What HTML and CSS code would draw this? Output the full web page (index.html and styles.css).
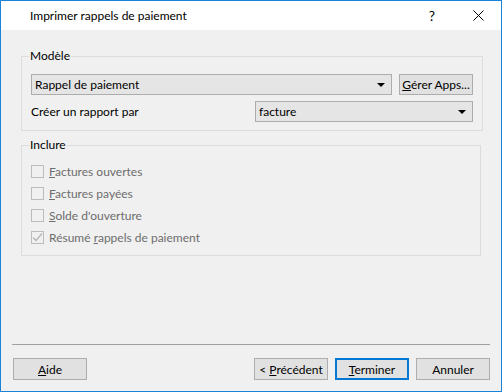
FILE: index.html
```html
<!DOCTYPE html>
<html>
<head>
    <title>Imprimer rappels de paiement</title>
    <link rel="stylesheet" href="styles.css">
</head>
<body>
    <div class="window">
        <div class="titlebar">
            <span class="title">Imprimer rappels de paiement</span>
            <span class="caption-btn help">?</span>
            <span class="caption-btn close">
                <svg width="11" height="11" viewBox="0 0 11 11">
                    <path d="M0.5 0.5 L10.5 10.5 M10.5 0.5 L0.5 10.5" stroke="#000" stroke-width="1" fill="none"/>
                </svg>
            </span>
        </div>

        <div class="content">
            <div class="main">
                <fieldset class="group">
                    <legend>Modèle</legend>
                    <div class="row">
                        <div class="combo combo-wide">
                            <span>Rappel de paiement</span>
                            <span class="arrow"></span>
                        </div>
                        <div class="btn btn-apps"><span><u>G</u>érer Apps...</span></div>
                    </div>
                    <div class="row row-second">
                        <span class="label">Créer un rapport par</span>
                        <div class="combo combo-short">
                            <span>facture</span>
                            <span class="arrow"></span>
                        </div>
                    </div>
                </fieldset>

                <fieldset class="group group-include">
                    <legend>Inclure</legend>
                    <div class="check-row">
                        <span class="check"></span>
                        <span><u>F</u>actures ouvertes</span>
                    </div>
                    <div class="check-row">
                        <span class="check"></span>
                        <span><u>F</u>actures payées</span>
                    </div>
                    <div class="check-row">
                        <span class="check"></span>
                        <span><u>S</u>olde d'ouverture</span>
                    </div>
                    <div class="check-row">
                        <span class="check">
                            <svg width="11" height="11" viewBox="0 0 11 11">
                                <polyline points="1,5.5 4,8.5 10,1.5" stroke="#b4b4b4" stroke-width="1.2" fill="none"/>
                            </svg>
                        </span>
                        <span>Résumé <u>r</u>appels de paiement</span>
                    </div>
                </fieldset>
            </div>

            <div class="footer">
                <div class="separator"></div>
                <div class="buttons">
                    <div class="btn"><span><u>A</u>ide</span></div>
                    <div class="spacer"></div>
                    <div class="btn"><span>&lt; <u>P</u>récédent</span></div>
                    <div class="btn btn-default"><span><u>T</u>erminer</span></div>
                    <div class="btn"><span>Annuler</span></div>
                </div>
            </div>
        </div>
    </div>
</body>
</html>
```

FILE: styles.css
```css
body {
    margin: 0;
    font-family: Lato, "Noto Sans", sans-serif;
    font-size: 12px;
    color: #000;
}
.window {
    width: 500px;
    height: 390px;
    border: 1px solid #1883d7;
    display: flex;
    flex-direction: column;
    background-color: #f0f0f0;
}
.titlebar {
    height: 29px;
    background-color: #fff;
    display: flex;
    align-items: center;
}
.title {
    flex: 1;
    padding-left: 29px;
}
.caption-btn {
    width: 46px;
    height: 29px;
    display: flex;
    align-items: center;
    justify-content: center;
}
.help {
    font-size: 14px;
}
.content {
    flex: 1;
    display: flex;
    flex-direction: column;
}
.main {
    flex: 1;
    padding: 0 20px;
}
.group {
    margin: 18px 0 0 0;
    padding: 10px 9px 8px 9px;
    border: 1px solid #dcdcdc;
}
.group legend {
    margin-left: -2px;
    padding: 0 1px;
    line-height: 16px;
}
.group-include {
    margin-top: 6px;
    padding-top: 7px;
    padding-bottom: 7px;
    color: #6d6d6d;
}
.group-include legend {
    color: #000;
}
.row {
    display: flex;
    align-items: center;
    gap: 6px;
}
.row-second {
    margin-top: 6px;
    justify-content: space-between;
}
.combo {
    height: 19px;
    border: 1px solid #adadad;
    background-color: #e5e5e5;
    display: flex;
    align-items: center;
    justify-content: space-between;
    padding: 0 6px 0 3px;
}
.combo-wide {
    width: 350px;
}
.combo-short {
    width: 207px;
}
.arrow {
    width: 0;
    height: 0;
    border-left: 4px solid transparent;
    border-right: 4px solid transparent;
    border-top: 4px solid #000;
}
.btn {
    height: 20px;
    border: 1px solid #adadad;
    background-color: #e1e1e1;
    display: flex;
    align-items: center;
    justify-content: center;
    box-sizing: border-box;
    white-space: nowrap;
}
.btn-apps {
    width: 74px;
    height: 21px;
    margin-left: 1px;
}
.check-row {
    height: 22px;
    display: flex;
    align-items: center;
    gap: 5px;
}
.check {
    width: 11px;
    height: 11px;
    border: 1px solid #bcbcbc;
    background-color: #f0f0f0;
    display: flex;
    align-items: center;
    justify-content: center;
}
.footer {
    padding: 0 11px 11px 11px;
}
.separator {
    height: 1px;
    background-color: #a0a0a0;
}
.buttons {
    display: flex;
    gap: 7px;
    margin-top: 13px;
    padding-left: 1px;
}
.buttons .btn {
    width: 74px;
    height: 22px;
}
.spacer {
    flex: 1;
}
.btn-default {
    border: 2px solid #0078d7;
}
```
